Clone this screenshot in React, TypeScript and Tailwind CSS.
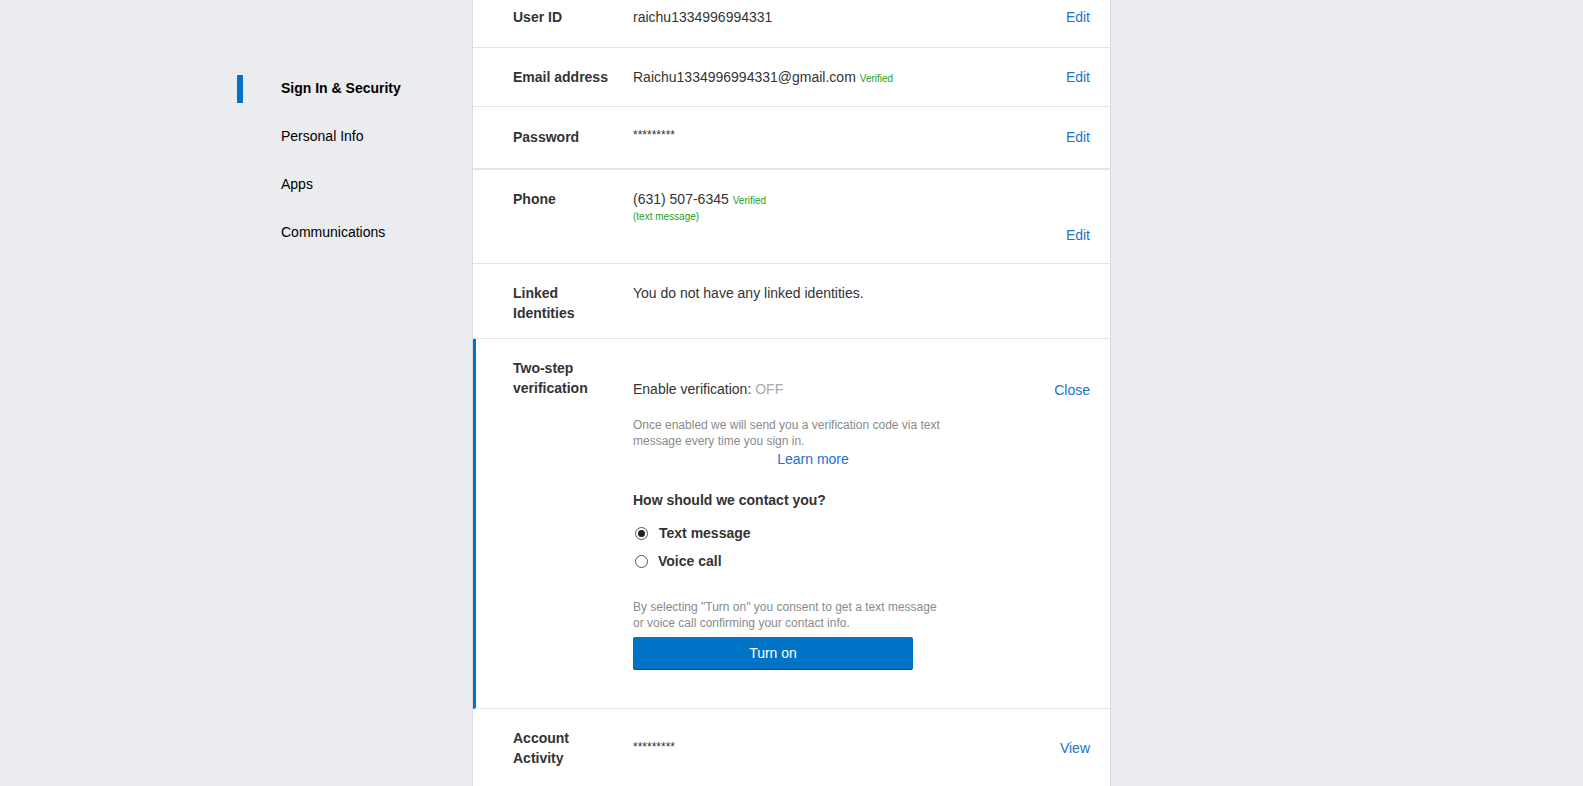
import React from 'react';

const navItems = ['Sign In & Security', 'Personal Info', 'Apps', 'Communications'];

const Label: React.FC<{ children: React.ReactNode }> = ({ children }) => (
  <div className="w-[120px] shrink-0 text-[14px] font-bold leading-5 text-[#333]">{children}</div>
);

const Action: React.FC<{ children: React.ReactNode; className?: string }> = ({ children, className }) => (
  <a href="#" className={`text-[14px] leading-5 text-[#1a73cf] ${className ?? ''}`}>
    {children}
  </a>
);

const Verified = () => <span className="ml-1 text-[10px] text-[#21a121]">Verified</span>;

const Radio: React.FC<{ checked?: boolean; label: string }> = ({ checked, label }) => (
  <label className="flex items-center leading-5">
    <span className="ml-[2px] flex h-[13px] w-[13px] items-center justify-center rounded-full border border-[#555] bg-white">
      {checked && <span className="h-[7px] w-[7px] rounded-full bg-[#222]" />}
    </span>
    <span className={`${checked ? 'ml-[11px]' : 'ml-[10px]'} text-[14px] font-bold text-[#333]`}>{label}</span>
  </label>
);

export default function App() {
  return (
    <div
      className="grid h-[786px] grid-cols-[1fr_639px_1fr] overflow-hidden bg-[#ebecf0]"
      style={{ fontFamily: '"Liberation Sans", Arial, sans-serif' }}
    >
      {/* left nav */}
      <nav className="flex justify-end">
        <ul className="w-[235px] pt-[75px]">
          {navItems.map((item, i) => (
            <li key={item} className="flex h-[48px] items-start">
              <span className={`h-[28px] w-[6px] ${i === 0 ? 'bg-[#0073c6]' : ''}`} />
              <span
                className={`ml-[38px] mt-[3px] text-[14px] leading-5 text-black ${i === 0 ? 'font-bold' : ''}`}
              >
                {item}
              </span>
            </li>
          ))}
        </ul>
      </nav>

      {/* panel */}
      <main className="border-x border-[#d9dbe0] bg-white">
        <div className="-mt-[12px]">
          {/* user id */}
          <div className="flex border-b border-[#e3e4e8] pb-[20px] pl-10 pr-5 pt-[19px]">
            <Label>User ID</Label>
            <div className="flex-1 text-[14px] leading-5 text-[#333]">raichu1334996994331</div>
            <Action>Edit</Action>
          </div>

          {/* email */}
          <div className="flex border-b border-[#e3e4e8] pb-[17px] pl-10 pr-5 pt-[19px]">
            <Label>Email address</Label>
            <div className="flex-1 text-[14px] leading-5 text-[#333]">
              Raichu1334996994331@gmail.com
              <Verified />
            </div>
            <Action>Edit</Action>
          </div>

          {/* password */}
          <div className="flex border-b-2 border-[#e3e4e8] pb-[21px] pl-10 pr-5 pt-5">
            <Label>Password</Label>
            <div className="-mt-[2px] flex-1 text-[12px] leading-5 text-[#333]">*********</div>
            <Action>Edit</Action>
          </div>

          {/* phone */}
          <div className="flex border-b border-[#e3e4e8] pb-[18px] pl-10 pr-5 pt-[19px]">
            <Label>Phone</Label>
            <div className="flex-1">
              <div className="text-[14px] leading-5 text-[#333]">
                (631) 507-6345
                <Verified />
              </div>
              <div className="-mt-[1px] text-[10px] leading-[14px] text-[#21a121]">(text message)</div>
              <div className="h-[21px]" />
            </div>
            <Action className="self-end">Edit</Action>
          </div>

          {/* linked identities */}
          <div className="flex border-b border-[#e3e4e8] pb-[15px] pl-10 pr-5 pt-[19px]">
            <Label>
              Linked
              <br />
              Identities
            </Label>
            <div className="flex-1 text-[14px] leading-5 text-[#333]">You do not have any linked identities.</div>
          </div>

          {/* two-step */}
          <div className="flex border-b border-l-[3px] border-[#e3e4e8] border-l-[#0073c6] pb-[39px] pl-[37px] pr-5 pt-[19px]">
            <Label>
              Two-step
              <br />
              verification
            </Label>
            <div className="mt-[21px] flex-1">
              <div className="text-[14px] leading-5 text-[#333]">
                Enable verification: <span className="text-[#aaa]">OFF</span>
              </div>
              <div className="mt-[18px] w-[360px]">
                <p className="w-[310px] text-[12px] leading-4 text-[#8a8a8a]">
                  Once enabled we will send you a verification code via text message every time you sign in.
                </p>
                <p className="text-center text-[14px] leading-5">
                  <a href="#" className="text-[#1a73cf]">
                    Learn more
                  </a>
                </p>
              </div>
              <div className="mt-[21px] text-[14px] font-bold leading-5 text-[#333]">How should we contact you?</div>
              <div className="mt-[13px]">
                <Radio checked label="Text message" />
              </div>
              <div className="mt-[8px]">
                <Radio label="Voice call" />
              </div>
              <p className="mt-[28px] w-[310px] text-[12px] leading-4 text-[#8a8a8a]">
                By selecting "Turn on" you consent to get a text message or voice call confirming your contact info.
              </p>
              <button
                type="button"
                className="mt-[6px] h-[32px] w-[280px] rounded-[2px] bg-[#0073c6] text-[14px] text-white shadow-[0_1px_0_#0b4f85]"
              >
                Turn on
              </button>
            </div>
            <Action className="mt-[22px] self-start">Close</Action>
          </div>

          {/* account activity */}
          <div className="flex items-center pl-10 pr-5 pt-[19px]">
            <Label>
              Account
              <br />
              Activity
            </Label>
            <div className="-mt-[2px] flex-1 text-[12px] leading-5 text-[#333]">*********</div>
            <Action>View</Action>
          </div>
        </div>
      </main>

      <div />
    </div>
  );
}
